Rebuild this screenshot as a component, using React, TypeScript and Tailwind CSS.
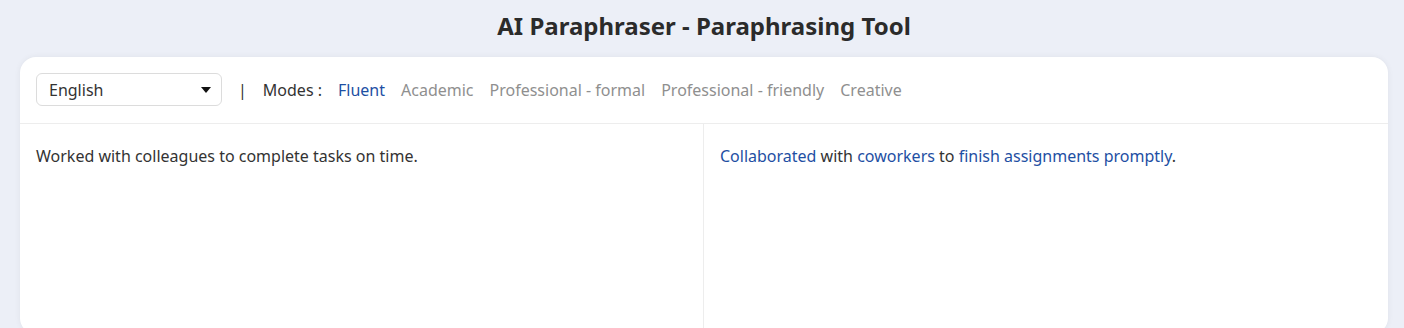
import { useState } from 'react'

const modes = ['Fluent', 'Academic', 'Professional - formal', 'Professional - friendly', 'Creative']

export default function App() {
  const [mode, setMode] = useState('Fluent')

  return (
    <div className="min-h-screen bg-[#eceff7] pl-5 pr-4 pt-[10px] font-['Noto_Sans',sans-serif] text-[#333]">
      <h1 className="text-center text-[24px] font-bold leading-[32px] text-[#2b2b2b]">
        AI Paraphraser - Paraphrasing Tool
      </h1>

      <div className="mt-[15px] rounded-2xl bg-white shadow-[0_0_6px_rgba(0,0,0,0.06)]">
        {/* Toolbar */}
        <div className="flex items-center border-b border-[#ededed] px-4 pt-4 pb-[17px] text-[16px]">
          <div className="flex h-[33px] w-[186px] items-center justify-between rounded-md border border-[#dcdcdc] pl-3 pr-[10px] text-[#333]">
            <span>English</span>
            <svg width="10" height="6" viewBox="0 0 10 6">
              <path d="M0 0h10L5 6z" fill="#111" />
            </svg>
          </div>
          <span className="ml-4 text-[#333]">|</span>
          <span className="ml-4 text-[#333]">Modes :</span>
          <div className="ml-4 flex items-center gap-4">
            {modes.map((m) => (
              <button
                key={m}
                onClick={() => setMode(m)}
                className={m === mode ? 'text-[#1e4fa3]' : 'text-[#8f8f8f]'}
              >
                {m}
              </button>
            ))}
          </div>
        </div>

        {/* Panels */}
        <div className="grid h-[210px] grid-cols-2 text-[16px]">
          <div className="border-r border-[#ededed] px-4 pt-5">
            Worked with colleagues to complete tasks on time.
          </div>
          <div className="px-4 pt-5">
            <span className="text-[#1e4fa3]">Collaborated</span> with{' '}
            <span className="text-[#1e4fa3]">coworkers</span> to{' '}
            <span className="text-[#1e4fa3]">finish assignments promptly</span>.
          </div>
        </div>
      </div>
    </div>
  )
}
